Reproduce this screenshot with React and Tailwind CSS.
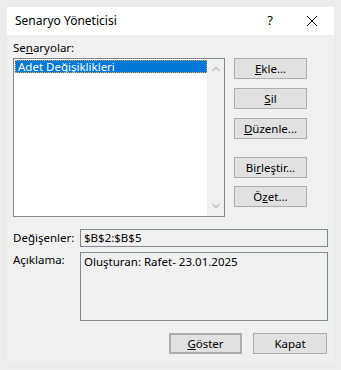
import { ChevronUp, ChevronDown } from "lucide-react";

const SIDE_BUTTONS = [
  { pre: "", key: "E", post: "kle...", mt: "mt-0" },
  { pre: "", key: "S", post: "il", mt: "mt-[9px]" },
  { pre: "", key: "D", post: "üzenle...", mt: "mt-[9px]" },
  { pre: "Bi", key: "r", post: "leştir...", mt: "mt-[18px]" },
  { pre: "Ö", key: "z", post: "et...", mt: "mt-[8px]" },
];

const Btn = ({ children, className = "" }) => (
  <button className={`h-[21px] flex items-center justify-center bg-[#e1e1e1] border border-[#adadad] text-[11.5px] text-black leading-none ${className}`}>
    {children}
  </button>
);

const App = () => {
  return (
    <div
      className="w-[341px] h-[370px] bg-[#ececec] pt-[7px] px-[7px] text-black"
      style={{ fontFamily: '"Segoe UI", "Noto Sans", sans-serif' }}
    >
      <div className="w-[327px] h-[356px] bg-[#f0f0f0] flex flex-col">
        {/* title bar */}
        <div className="h-[28px] bg-white flex items-center pl-[8px] text-[12px]">
          <span className="flex-1">Senaryo Yöneticisi</span>
          <span className="w-[20px] text-center mr-[26px] text-[13px]">?</span>
          <svg width="12" height="12" viewBox="0 0 12 12" className="mr-[16px]">
            <path d="M1 1 L11 11 M11 1 L1 11" stroke="#000" strokeWidth="1" />
          </svg>
        </div>

        <div className="px-[6px] pt-[3px] flex flex-col text-[11.5px]">
          <div className="h-[20px] leading-[20px]">
            Se<span className="underline">n</span>aryolar:
          </div>

          <div className="flex">
            {/* list */}
            <div className="w-[212px] h-[159px] border border-[#828790] bg-white flex">
              <div className="flex-1 pl-[1px] pt-[1px]">
                <div className="h-[13px] bg-[#0078d7] text-white leading-[13px] pl-[3px] outline outline-1 outline-dotted outline-[#e4a54b] -outline-offset-1">
                  Adet Değişiklikleri
                </div>
              </div>
              <div className="w-[17px] bg-[#f0f0f0] flex flex-col items-center justify-between py-[4px]">
                <ChevronUp size={12} color="#c2c2c2" strokeWidth={2.5} />
                <ChevronDown size={12} color="#c2c2c2" strokeWidth={2.5} />
              </div>
            </div>

            {/* side buttons */}
            <div className="ml-[9px] flex flex-col">
              {SIDE_BUTTONS.map((b) => (
                <Btn key={b.post} className={`w-[73px] ${b.mt}`}>
                  {b.pre}
                  <span className="underline">{b.key}</span>
                  {b.post}
                </Btn>
              ))}
            </div>
          </div>

          {/* changing cells */}
          <div className="flex items-center mt-[12px]">
            <span className="w-[67px]">Değişenler:</span>
            <div className="w-[248px] h-[18px] border border-[#828790] leading-[16px] pl-[3px]">
              $B$2:$B$5
            </div>
          </div>

          <div className="flex mt-[5px]">
            <span className="w-[67px] leading-[16px]">Açıklama:</span>
            <div className="w-[248px] h-[69px] border border-[#828790] pl-[3px] pt-[1px] leading-[16px]">
              Oluşturan: Rafet- 23.01.2025
            </div>
          </div>

          <div className="flex justify-end mt-[12px] gap-[11px] pr-[1px]">
            <Btn className="w-[73px] border-2 border-[#0078d7]">
              <span className="underline">G</span>öster
            </Btn>
            <Btn className="w-[74px]">Kapat</Btn>
          </div>
        </div>
      </div>
    </div>
  );
};

export default App;
